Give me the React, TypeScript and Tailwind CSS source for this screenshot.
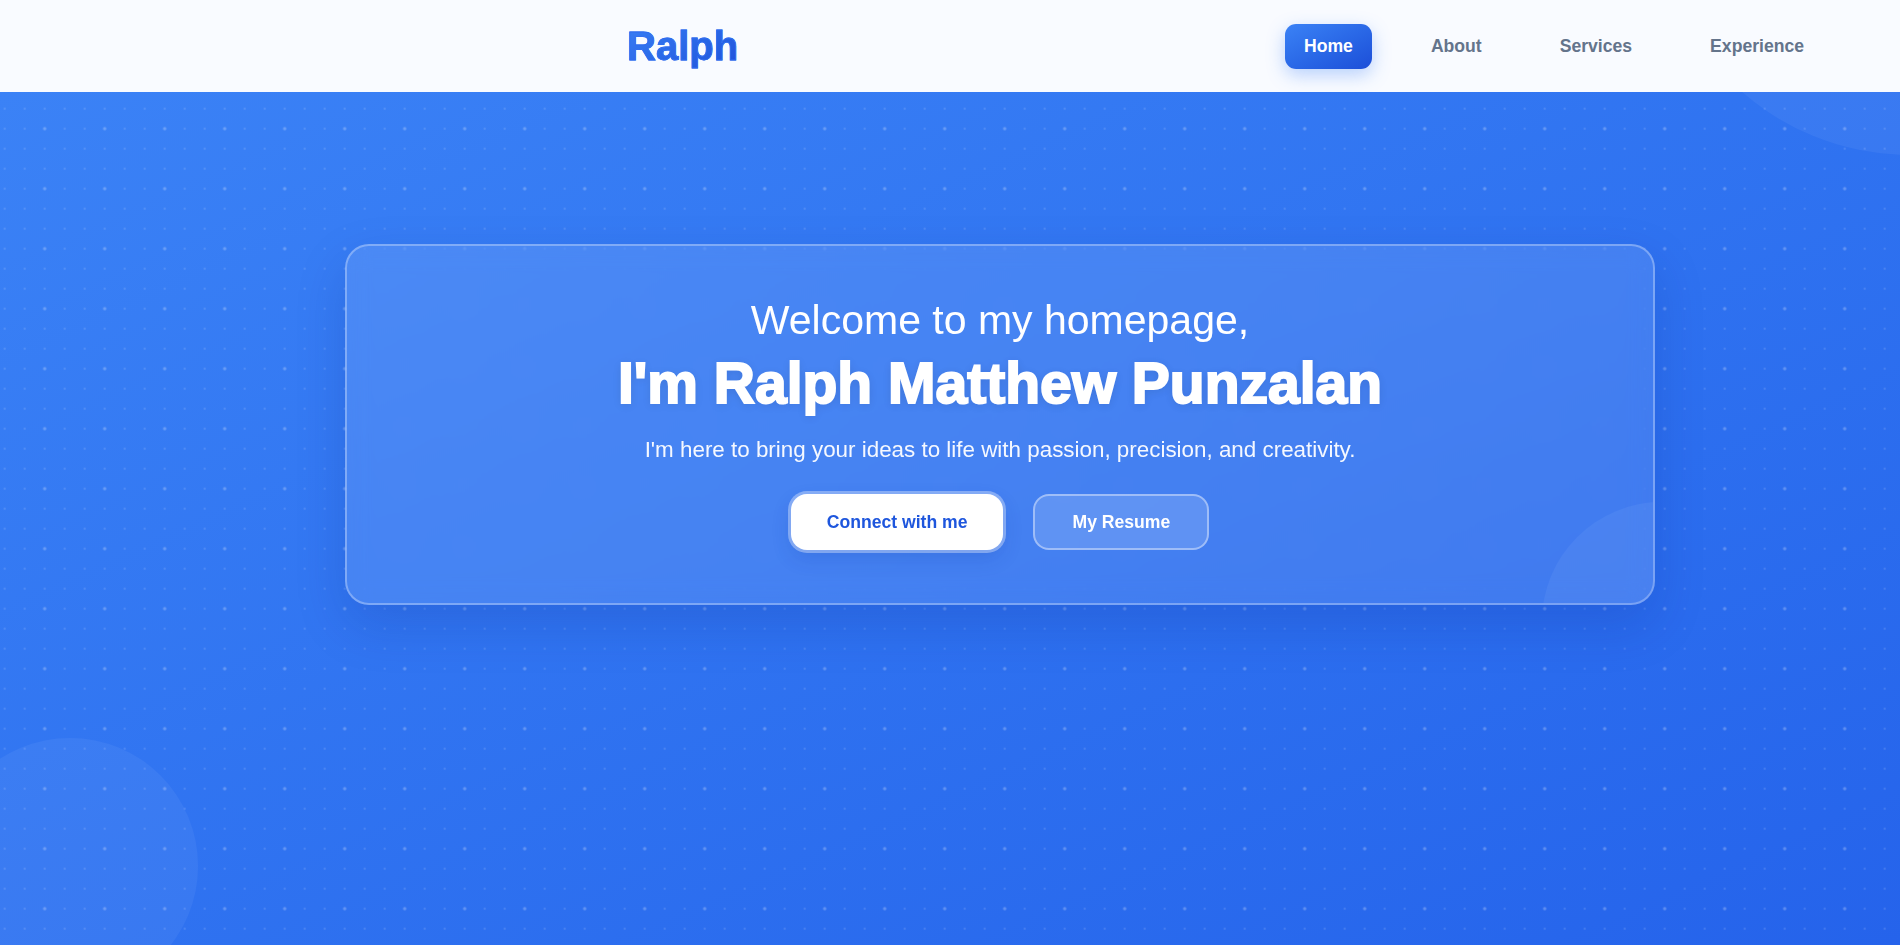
import { useState } from 'react';

const links = ['Home', 'About', 'Services', 'Experience'];

function App() {
  const [active, setActive] = useState('Home');

  return (
    <div className="min-h-screen bg-[#2f73ee] font-['Liberation_Sans',Arial,sans-serif]">
      {/* Header */}
      <header className="relative z-10 h-[92px] bg-[#f9fbff] flex items-center justify-between pl-[627px] pr-[77px]">
        <h1 className="text-[40px] font-extrabold bg-linear-to-br from-[#3b82f6] to-[#1d4ed8] bg-clip-text text-transparent [-webkit-text-stroke:0.8px_#2e6cf0]">
          Ralph
        </h1>
        <nav className="flex items-center gap-10">
          {links.map((link) => (
            <button
              key={link}
              onClick={() => setActive(link)}
              className={
                link === active
                  ? 'px-[19px] py-[12.5px] rounded-[11px] text-[17.6px] leading-[20px] font-bold text-white bg-linear-to-br from-[#3b82f6] to-[#1d4ed8] shadow-[0_6px_18px_rgba(59,130,246,0.35)]'
                  : 'px-[19px] py-[12.5px] rounded-[11px] text-[17.6px] leading-[20px] font-bold text-[#64748b]'
              }
            >
              {link}
            </button>
          ))}
        </nav>
      </header>

      {/* Hero */}
      <section className="relative h-[853px] overflow-hidden bg-linear-to-br from-[#3b82f6] to-[#2563eb] pl-[100px] pt-[152px] flex justify-center items-start">
        {/* dot grid */}
        <div className="absolute inset-0 [background-image:radial-gradient(circle,rgba(255,255,255,0.13)_1px,transparent_1.6px),radial-gradient(circle,rgba(255,255,255,0.15)_1.5px,transparent_2.2px)] [background-size:20px_20px,60px_60px] [background-position:14.7px_6.7px,14.7px_6.7px]" />
        {/* decorative circles */}
        <div className="absolute left-[1655px] top-[-447px] w-[510px] h-[510px] rounded-full bg-white/5" />
        <div className="absolute left-[-58px] top-[646px] w-[256px] h-[256px] rounded-full bg-white/5" />

        {/* Card */}
        <div className="relative w-[1310px] h-[361px] overflow-hidden rounded-3xl border-2 border-white/30 bg-white/10 backdrop-blur-md shadow-[0_20px_50px_rgba(10,40,140,0.18)] pt-[50px] flex flex-col items-center text-white">
          <div className="absolute left-[1195px] top-[256px] w-[240px] h-[240px] rounded-full bg-white/5" />
          <p className="relative text-[41px] leading-[48px]">Welcome to my homepage,</p>
          <h2 className="relative mt-[6px] text-[57px] leading-[67px] font-extrabold [text-shadow:0_2px_10px_rgba(0,0,0,0.12)] [-webkit-text-stroke:2px_white]">
            I'm Ralph Matthew Punzalan
          </h2>
          <p className="relative mt-[17px] text-[22.4px] leading-[32px] text-white/95">
            I'm here to bring your ideas to life with passion, precision, and creativity.
          </p>
          <div className="relative mt-[28px] flex items-center gap-[30px]">
            <a
              href="#contact"
              className="px-[36px] py-[18px] rounded-[16px] bg-white ring-[3px] ring-white/35 text-[17.6px] leading-[20px] font-bold text-[#1e56dd] shadow-[0_8px_20px_rgba(10,40,140,0.15)]"
            >
              Connect with me
            </a>
            <a
              href="#resume"
              className="px-[37px] py-[16px] rounded-[16px] border-2 border-white/40 bg-white/15 text-[17.6px] leading-[20px] font-bold text-white"
            >
              My Resume
            </a>
          </div>
        </div>
      </section>
    </div>
  );
}

export default App;
